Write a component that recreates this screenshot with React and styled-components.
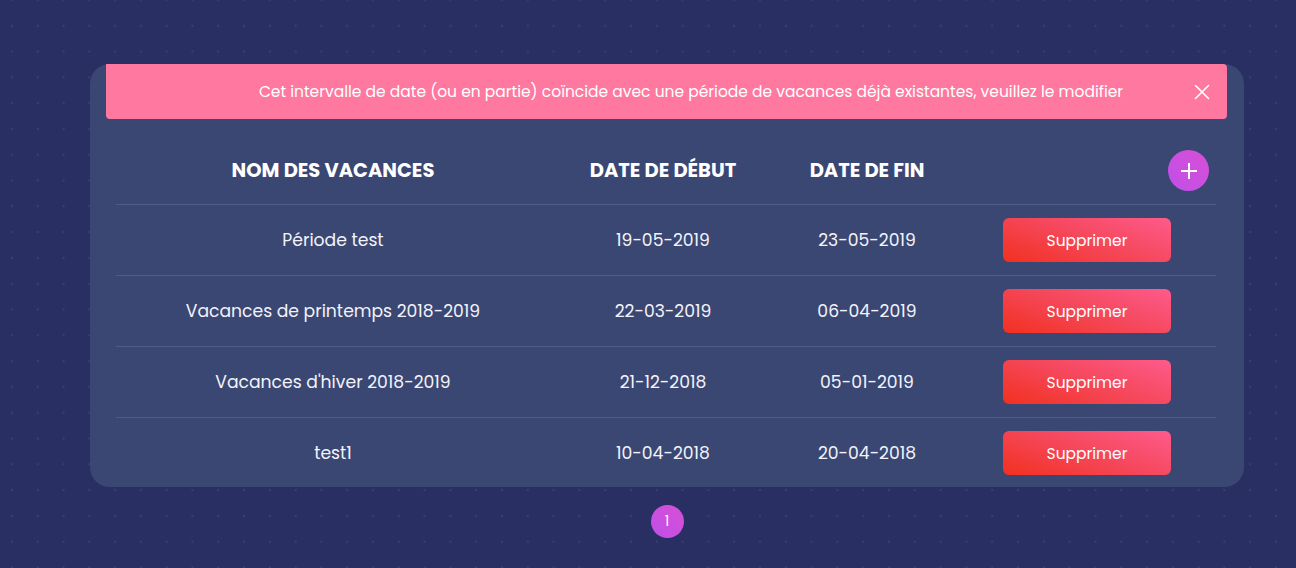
import React from 'react';
import styled, { createGlobalStyle } from 'styled-components';

const GlobalStyle = createGlobalStyle`
  html, body { margin: 0; padding: 0; }
  body {
    font-family: Poppins, "DejaVu Sans", "Noto Sans", sans-serif;
    background-color: #2a2f63;
    background-image: radial-gradient(circle, rgba(255,255,255,0.07) 1.2px, transparent 1.6px);
    background-size: 25.8px 25.8px;
    background-position: -1px -13px;
    min-height: 568px;
    color: #fff;
  }
`;

const vacances = [
  { name: 'Période test', start: '19-05-2019', end: '23-05-2019' },
  { name: 'Vacances de printemps 2018-2019', start: '22-03-2019', end: '06-04-2019' },
  { name: "Vacances d'hiver 2018-2019", start: '21-12-2018', end: '05-01-2019' },
  { name: 'test1', start: '10-04-2018', end: '20-04-2018' },
];

function App() {
  return (
    <>
      <GlobalStyle />
      <Page>
        <Card>
          <Alert>
            <AlertText>
              Cet intervalle de date (ou en partie) coïncide avec une période de vacances déjà existantes, veuillez le modifier
            </AlertText>
            <CloseButton aria-label="close">
              <svg width="16" height="16" viewBox="0 0 16 16">
                <path d="M1.5 1.5 L14.5 14.5 M14.5 1.5 L1.5 14.5" stroke="#fff" strokeWidth="1.6" strokeLinecap="round" />
              </svg>
            </CloseButton>
          </Alert>

          <Table>
            <HeadRow>
              <HeadCell>NOM DES VACANCES</HeadCell>
              <HeadCell>DATE DE DÉBUT</HeadCell>
              <HeadCell>DATE DE FIN</HeadCell>
              <HeadCell $end>
                <AddButton aria-label="ajouter">
                  <svg width="20" height="20" viewBox="0 0 20 20">
                    <path d="M10 2 V18 M2 10 H18" stroke="#fff" strokeWidth="2" />
                  </svg>
                </AddButton>
              </HeadCell>
            </HeadRow>
            {vacances.map((v) => (
              <Row key={v.name}>
                <Cell>{v.name}</Cell>
                <Cell>{v.start}</Cell>
                <Cell>{v.end}</Cell>
                <Cell>
                  <DeleteButton>Supprimer</DeleteButton>
                </Cell>
              </Row>
            ))}
          </Table>
        </Card>

        <Pagination>
          <PageDot>1</PageDot>
        </Pagination>
      </Page>
    </>
  );
}

const Page = styled.div`
  padding: 64px 52px 0 90px;
  display: flex;
  flex-direction: column;
  align-items: flex-start;
`;

const Card = styled.div`
  width: 1154px;
  height: 423px;
  background: #3b4773;
  border-radius: 20px;
  box-sizing: border-box;
  padding: 0 17px 0 16px;
  display: flex;
  flex-direction: column;
`;

const Alert = styled.div`
  height: 55px;
  flex-shrink: 0;
  background: #fe789f;
  border-radius: 0 4px 4px 4px;
  display: flex;
  align-items: center;
  margin-bottom: 21px;
`;

const AlertText = styled.p`
  margin: 0;
  flex: 1;
  text-align: center;
  padding-left: 82px;
  font-size: 15.5px;
  color: #fff;
`;

const CloseButton = styled.button`
  background: none;
  border: none;
  padding: 0;
  width: 16px;
  height: 16px;
  margin: 0 17px 0 0;
  display: flex;
  cursor: pointer;
`;

const Table = styled.div`
  margin: 0 11px 0 10px;
  display: flex;
  flex-direction: column;
`;

const cols = '434px 226px 182px 1fr';

const HeadRow = styled.div`
  display: grid;
  grid-template-columns: ${cols};
  height: 65px;
  box-sizing: border-box;
  padding-bottom: 4px;
  align-items: center;
  border-bottom: 1px solid #505b87;
`;

const HeadCell = styled.div`
  text-align: center;
  font-weight: 700;
  font-size: 19.5px;
  color: #fff;
  display: flex;
  justify-content: ${(p) => (p.$end ? 'flex-end' : 'center')};
  padding-right: ${(p) => (p.$end ? '7px' : '0')};
  margin-top: ${(p) => (p.$end ? '1px' : '0')};
`;

const Row = styled.div`
  display: grid;
  grid-template-columns: ${cols};
  height: 71px;
  box-sizing: border-box;
  align-items: center;
  border-bottom: 1px solid #505b87;
  &:last-child {
    border-bottom: none;
    height: 70px;
  }
`;

const Cell = styled.div`
  text-align: center;
  font-size: 17.2px;
  color: #f2f3fa;
`;

const AddButton = styled.button`
  width: 41px;
  height: 41px;
  border-radius: 50%;
  border: none;
  background: linear-gradient(45deg, #c04fe8, #d650d6);
  display: flex;
  align-items: center;
  justify-content: center;
  cursor: pointer;
`;

const DeleteButton = styled.button`
  width: 168px;
  height: 44px;
  border: none;
  border-radius: 6px;
  background: linear-gradient(20deg, #f2301f 0%, #f5475a 50%, #fe5b8c 100%);
  color: #fff;
  font-family: inherit;
  font-size: 15.5px;
  cursor: pointer;
`;

const Pagination = styled.div`
  width: 1154px;
  display: flex;
  justify-content: center;
  margin-top: 18px;
`;

const PageDot = styled.span`
  width: 33px;
  height: 33px;
  border-radius: 50%;
  background: linear-gradient(45deg, #c04fe8, #d650d6);
  display: flex;
  align-items: center;
  justify-content: center;
  font-size: 14px;
  color: #fff;
`;

export default App;
